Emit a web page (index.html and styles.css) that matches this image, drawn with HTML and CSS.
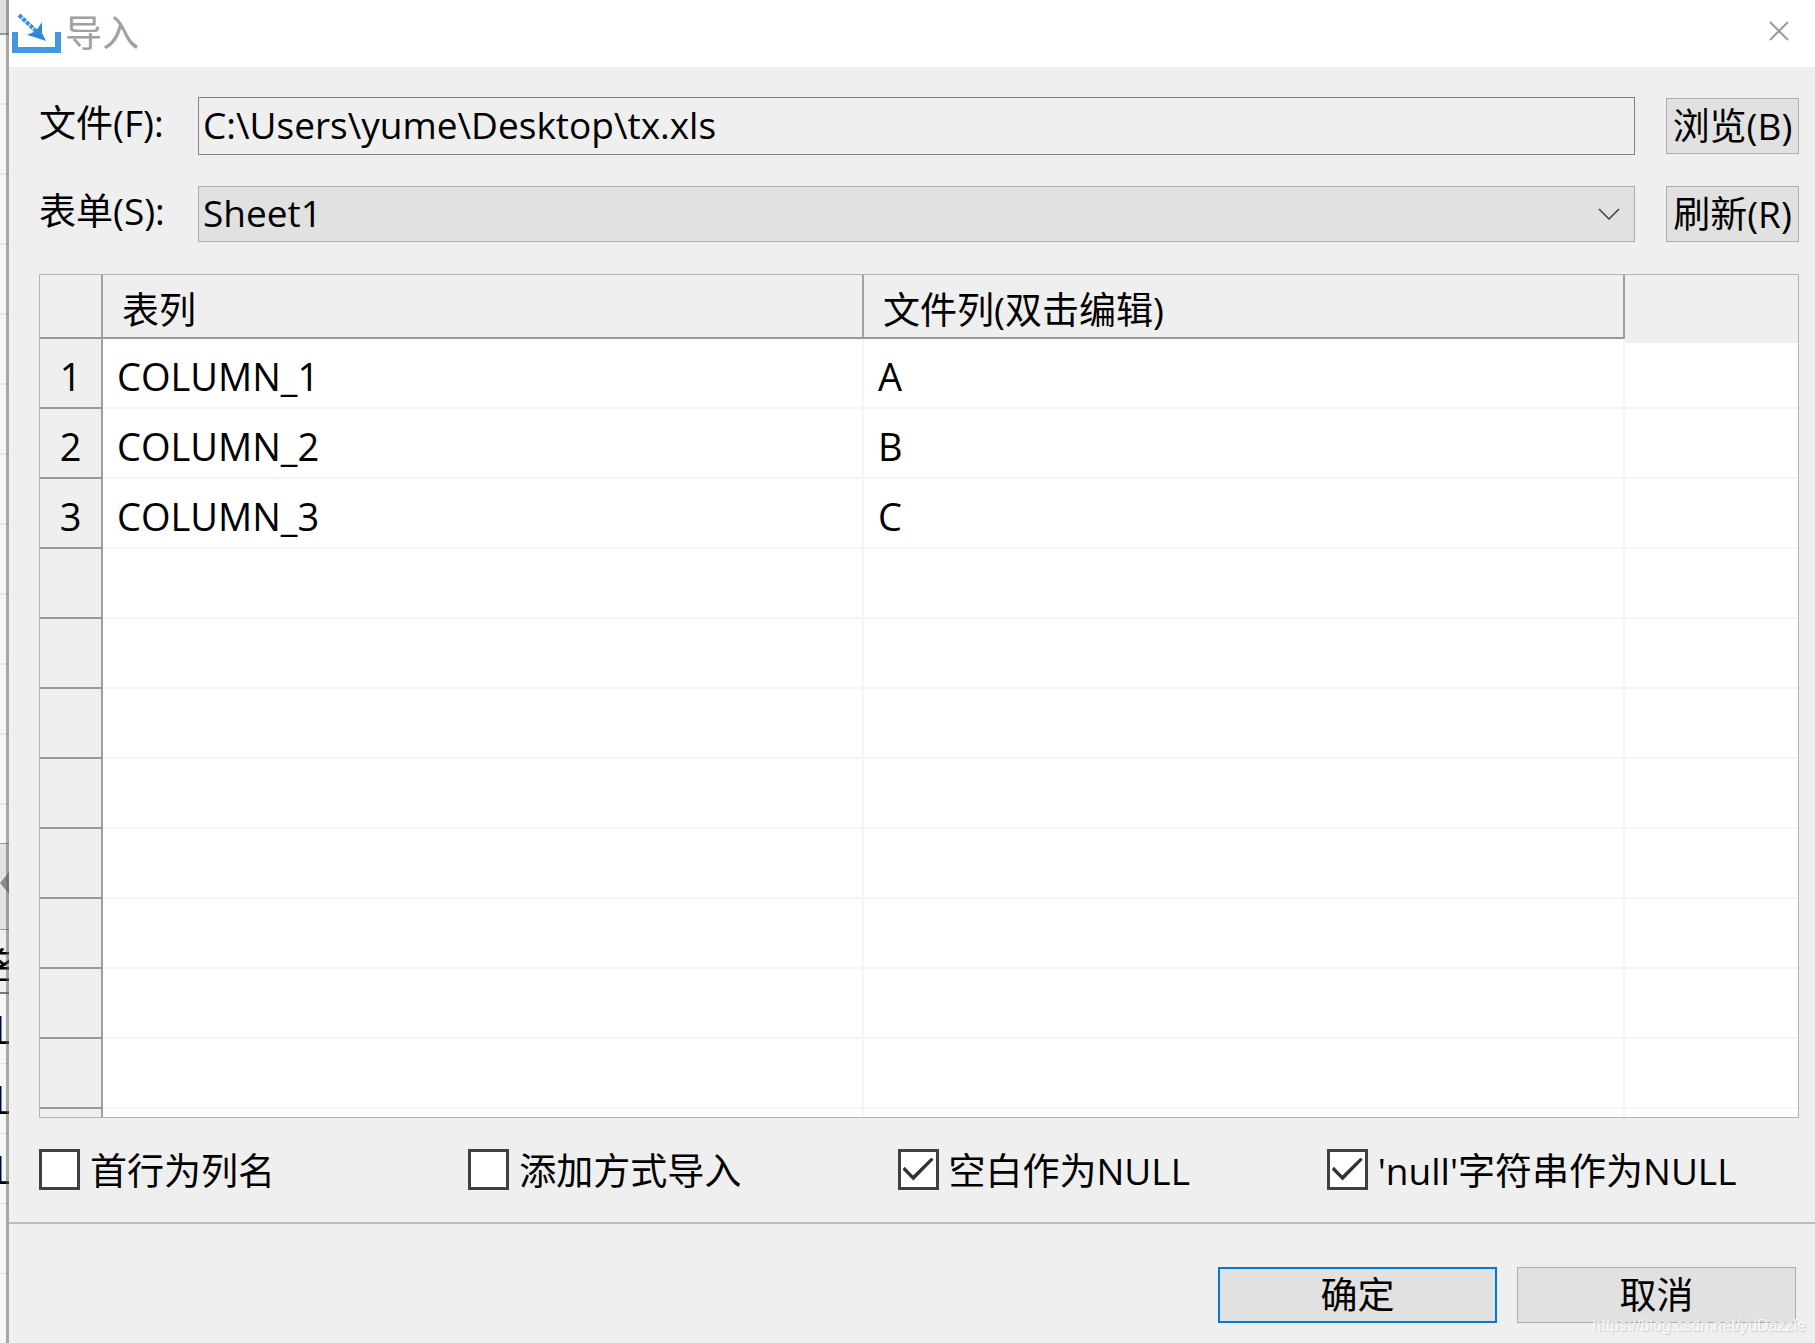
FILE: index.html
```html
<!DOCTYPE html>
<html lang="zh-CN">
<head>
<meta charset="utf-8">
<title>导入</title>
<link rel="stylesheet" href="styles.css">
</head>
<body>
<div class="behind" aria-hidden="true">
  <div class="behind-top"></div>
  <div class="behind-grid"></div>
  <div class="behind-scroll"><svg width="9" height="24" viewBox="0 0 9 24"><path d="M0 12 9 1V23Z" fill="#8c8c8c"/></svg></div>
  <div class="behind-head">名</div>
  <div class="behind-cell">L</div>
  <div class="behind-cell">L</div>
  <div class="behind-cell">L</div>
  <div class="behind-cell"></div>
</div>
<main class="dialog">
  <header class="titlebar">
    <svg class="app-icon" width="50" height="42" viewBox="0 0 50 42">
      <path d="M0 19H6V34H43V19H49V40H0Z" fill="#4595df"/>
      <path d="M7 2 25 19" stroke="#3c8fde" stroke-width="4" stroke-dasharray="4 1" fill="none"/>
      <path d="M30 9V20L34 28 22 24 15 22 24 18Z" fill="#2f87dc"/>
    </svg>
    <h1 class="title">导入</h1>
    <button class="close" type="button" aria-label="关闭"><svg width="20" height="20" viewBox="0 0 20 20"><path d="M1 1 19 19M19 1 1 19" stroke="#9b9b9b" stroke-width="2" fill="none"/></svg></button>
  </header>
  <form class="content" id="import">
    <div class="fields">
      <label for="file">文件(F):</label>
      <input class="file" id="file" type="text" value="C:\Users\yume\Desktop\tx.xls" readonly>
      <button class="btn" type="button">浏览(B)</button>
      <label for="sheet">表单(S):</label>
      <div class="select">
        <select id="sheet"><option>Sheet1</option></select>
        <svg class="chevron" width="22" height="12" viewBox="0 0 22 12"><path d="M1 1 11 11 21 1" stroke="#404040" stroke-width="1.5" fill="none"/></svg>
      </div>
      <button class="btn" type="button">刷新(R)</button>
    </div>
    <div class="grid">
      <table>
        <colgroup><col class="col-num"><col class="col-data"><col class="col-data"><col></colgroup>
        <thead><tr><th></th><th>表列</th><th>文件列(双击编辑)</th><th class="blank"></th></tr></thead>
        <tbody>
          <tr><th>1</th><td>COLUMN_1</td><td>A</td><td></td></tr>
          <tr><th>2</th><td>COLUMN_2</td><td>B</td><td></td></tr>
          <tr><th>3</th><td>COLUMN_3</td><td>C</td><td></td></tr>
          <tr><th></th><td></td><td></td><td></td></tr>
          <tr><th></th><td></td><td></td><td></td></tr>
          <tr><th></th><td></td><td></td><td></td></tr>
          <tr><th></th><td></td><td></td><td></td></tr>
          <tr><th></th><td></td><td></td><td></td></tr>
          <tr><th></th><td></td><td></td><td></td></tr>
          <tr><th></th><td></td><td></td><td></td></tr>
          <tr><th></th><td></td><td></td><td></td></tr>
          <tr class="partial"><th></th><td></td><td></td><td></td></tr>
        </tbody>
      </table>
    </div>
    <div class="options">
      <label><input type="checkbox"><span>首行为列名</span></label>
      <label><input type="checkbox"><span>添加方式导入</span></label>
      <label><input type="checkbox" checked><span>空白作为NULL</span></label>
      <label><input type="checkbox" checked><span>'null'字符串作为NULL</span></label>
    </div>
  </form>
  <footer class="actions">
    <button class="btn primary" type="submit" form="import">确定</button>
    <button class="btn" type="button">取消</button>
  </footer>
</main>
<div class="watermark">https://blog.csdn.net/yuDazzle</div>
</body>
</html>
```
FILE: styles.css
```css
* { box-sizing: border-box; }

body {
  margin: 0;
  min-height: 100vh;
  display: flex;
  position: relative;
  background: #efefef;
  color: #000;
  font: 37px/48px "Open Sans", "Noto Sans CJK SC", sans-serif;
}

button, input, select { font: inherit; color: inherit; margin: 0; }

/* Edge of the window behind the dialog */
.behind {
  width: 9px;
  flex: none;
  overflow: hidden;
  position: relative;
  background: #f7f7f7;
}
.behind::after {
  content: "";
  position: absolute;
  inset: 0 0 0 6px;
  background: rgba(90, 90, 90, .5);
}
.behind-top { height: 35px; background: #dedede; border-bottom: 2px solid #999; }
.behind-grid {
  height: 808px;
  background: repeating-linear-gradient(#f7f7f7 0 68px, #e6e6e6 68px 70px);
}
.behind-scroll {
  height: 87px;
  display: flex;
  align-items: center;
  padding-bottom: 8px;
  background: #e3e3e3;
  border-top: 1px solid #999;
  border-bottom: 1px solid #999;
}
.behind-head, .behind-cell { display: flex; justify-content: center; align-items: center; }
.behind-head { height: 64px; padding-top: 10px; background: #efefef; border-bottom: 2px solid #777; }
.behind-cell { height: 70px; border-bottom: 1px solid #e0e0e0; font-size: 38px; }

.dialog { flex: 1; min-width: 0; display: flex; flex-direction: column; }

.titlebar {
  height: 67px;
  display: flex;
  align-items: center;
  gap: 3px;
  padding: 0 26px 10px 3px;
  background: #fff;
}
.app-icon { margin-top: 10px; }
.title { margin: 0; flex: 1; color: #a0a0a0; font-size: 37px; font-weight: 400; padding-top: 8px; }
.close { border: 0; background: none; padding: 0; height: 20px; display: flex; margin-top: 5px; }

.content { padding: 30px 16px 29px 30px; }

.fields {
  display: grid;
  grid-template-columns: 128px 1fr 133px;
  column-gap: 31px;
  row-gap: 31px;
  align-items: center;
}
.fields label { white-space: nowrap; padding-bottom: 6px; }

.file {
  width: 100%;
  height: 58px;
  padding: 0 4px 4px;
  border: 1px solid #838383;
  border-radius: 0;
  background: #efefef;
  outline: 0;
}

.select { display: grid; align-items: center; }
.select > * { grid-area: 1 / 1; }
.select select {
  appearance: none;
  width: 100%;
  height: 56px;
  padding: 0 4px 2px;
  border: 1px solid #adadad;
  border-radius: 0;
  background: #e1e1e1;
}
.chevron { justify-self: end; margin-right: 15px; pointer-events: none; }

.btn {
  height: 56px;
  padding: 0;
  border: 1px solid #adadad;
  background: #e1e1e1;
  white-space: nowrap;
}
.btn.primary { border: 2px solid #0078d7; }

.grid { margin-top: 32px; border: 1px solid #b4b4ba; background: #fff; }
.grid table { width: 100%; table-layout: fixed; border-collapse: separate; border-spacing: 0; }
.col-num { width: 63px; }
.col-data { width: 761px; }
.grid th, .grid td {
  height: 70px;
  padding: 6px 12px 0 14px;
  font-size: 38px;
  font-weight: 400;
  text-align: left;
}
.grid td { border-right: 2px solid #f5f5f5; border-bottom: 2px solid #f5f5f5; }
.grid td:last-child { border-right: 0; }
.grid th { background: #efefef; border-right: 2px solid #a0a0a0; border-bottom: 2px solid #999; }
.grid thead th { height: 64px; font-size: 37px; padding: 8px 0 0 19px; }
.grid .blank { border-right: 0; border-bottom-color: #efefef; box-shadow: 0 4px #efefef; }
.grid tbody th { text-align: center; padding: 6px 0 0; }
.grid .partial th, .grid .partial td { height: 8px; padding: 0; border-bottom: 0; }

.options {
  display: grid;
  grid-template-columns: repeat(4, 1fr);
  margin: 27px 43px 0 0;
}
.options label { display: flex; align-items: center; gap: 10px; white-space: nowrap; }
.options span { height: 48px; padding-top: 2px; }
.options input {
  appearance: none;
  flex: none;
  width: 41px;
  height: 41px;
  border: 3px solid #404040;
  background: #fff;
  display: grid;
  place-items: center;
}
.options input:checked::before {
  content: "";
  width: 31px;
  height: 23px;
  background: #333;
  clip-path: polygon(0 52%, 7% 40%, 34% 78%, 93% 0, 100% 10%, 35% 100%);
}

.actions {
  flex: 1;
  display: flex;
  justify-content: flex-end;
  align-items: flex-start;
  gap: 20px;
  padding: 43px 19px 20px;
  border-top: 2px solid #bdbdbd;
}
.actions .btn { width: 279px; }

.watermark {
  position: absolute;
  right: 9px;
  bottom: 7px;
  color: rgba(255, 255, 255, .8);
  text-shadow: 1px 1px 1px rgba(0, 0, 0, .15);
  font: 16px/20px "Liberation Sans", sans-serif;
}
```
